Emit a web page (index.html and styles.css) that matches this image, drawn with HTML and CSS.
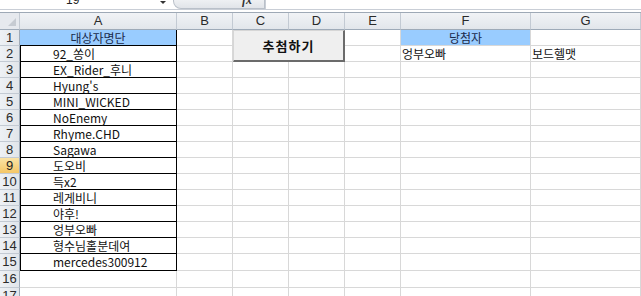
FILE: index.html
```html
<!DOCTYPE html>
<html lang="ko">
<head>
<meta charset="utf-8">
<link rel="stylesheet" href="styles.css">
</head>
<body>
<div class="fbar">
  <div class="namebox"><span class="nb-text">19</span><span class="caret"></span></div>
  <div class="fxpill"><span class="fx">fx</span></div>
  <div class="formula"></div>
</div>
<div class="gap"></div>
<div class="sheet">
  <div class="ch corner"><span class="tri"></span></div>
  <div class="ch">A</div><div class="ch">B</div><div class="ch">C</div><div class="ch">D</div><div class="ch">E</div><div class="ch">F</div><div class="ch">G</div>

  <div class="rh">1</div><div class="c a hl center title">대상자명단</div><div class="c"></div><div class="c"></div><div class="c"></div><div class="c"></div><div class="c hl center">당첨자</div><div class="c"></div>
  <div class="rh">2</div><div class="c a b">92_쏭이</div><div class="c"></div><div class="c"></div><div class="c"></div><div class="c"></div><div class="c t">엉부오빠</div><div class="c t">보드헬맷</div>
  <div class="rh">3</div><div class="c a b">EX_Rider_후니</div><div class="c"></div><div class="c"></div><div class="c"></div><div class="c"></div><div class="c"></div><div class="c"></div>
  <div class="rh">4</div><div class="c a b">Hyung's</div><div class="c"></div><div class="c"></div><div class="c"></div><div class="c"></div><div class="c"></div><div class="c"></div>
  <div class="rh">5</div><div class="c a b">MINI_WICKED</div><div class="c"></div><div class="c"></div><div class="c"></div><div class="c"></div><div class="c"></div><div class="c"></div>
  <div class="rh">6</div><div class="c a b">NoEnemy</div><div class="c"></div><div class="c"></div><div class="c"></div><div class="c"></div><div class="c"></div><div class="c"></div>
  <div class="rh">7</div><div class="c a b">Rhyme.CHD</div><div class="c"></div><div class="c"></div><div class="c"></div><div class="c"></div><div class="c"></div><div class="c"></div>
  <div class="rh">8</div><div class="c a b">Sagawa</div><div class="c"></div><div class="c"></div><div class="c"></div><div class="c"></div><div class="c"></div><div class="c"></div>
  <div class="rh sel">9</div><div class="c a b">도오비</div><div class="c"></div><div class="c"></div><div class="c"></div><div class="c"></div><div class="c"></div><div class="c"></div>
  <div class="rh">10</div><div class="c a b">득x2</div><div class="c"></div><div class="c"></div><div class="c"></div><div class="c"></div><div class="c"></div><div class="c"></div>
  <div class="rh">11</div><div class="c a b">레게비니</div><div class="c"></div><div class="c"></div><div class="c"></div><div class="c"></div><div class="c"></div><div class="c"></div>
  <div class="rh">12</div><div class="c a b">야후!</div><div class="c"></div><div class="c"></div><div class="c"></div><div class="c"></div><div class="c"></div><div class="c"></div>
  <div class="rh">13</div><div class="c a b">엉부오빠</div><div class="c"></div><div class="c"></div><div class="c"></div><div class="c"></div><div class="c"></div><div class="c"></div>
  <div class="rh">14</div><div class="c a b">형수님홀분데여</div><div class="c"></div><div class="c"></div><div class="c"></div><div class="c"></div><div class="c"></div><div class="c"></div>
  <div class="rh">15</div><div class="c a b">mercedes300912</div><div class="c"></div><div class="c"></div><div class="c"></div><div class="c"></div><div class="c"></div><div class="c"></div>
  <div class="rh">16</div><div class="c"></div><div class="c"></div><div class="c"></div><div class="c"></div><div class="c"></div><div class="c"></div><div class="c"></div>
  <div class="rh">17</div><div class="c"></div><div class="c"></div><div class="c"></div><div class="c"></div><div class="c"></div><div class="c"></div><div class="c"></div>

  <div class="btn">추첨하기</div>
</div>
</body>
</html>
```
FILE: styles.css
```css
html, body {
  margin: 0;
  padding: 0;
  background: #ffffff;
  overflow: hidden;
  width: 641px;
  height: 296px;
}
body {
  font-family: "Noto Sans CJK KR", "Noto Sans", sans-serif;
  color: #000;
}
.fbar {
  display: flex;
  height: 9px;
  border-bottom: 1px solid #c9ced6;
  overflow: hidden;
}
.namebox {
  width: 173px;
  display: flex;
  position: relative;
  background: #fff;
}
.nb-text {
  font-family: "Liberation Sans", sans-serif;
  font-size: 12px;
  line-height: 14px;
  margin-top: -7px;
  margin-left: 66px;
  color: #222;
}
.caret {
  margin-left: auto;
  margin-right: 7px;
  margin-top: 1px;
  width: 0;
  height: 0;
  border-left: 3px solid transparent;
  border-right: 3px solid transparent;
  border-top: 3px solid #333;
}
.fxpill {
  width: 92px;
  background: linear-gradient(#eef0f3, #e1e4e9);
  border: 1px solid #b9c0c9;
  border-top: none;
  border-radius: 0 0 0 8px;
  display: flex;
  justify-content: flex-end;
  box-sizing: border-box;
}
.fx {
  font-family: "Liberation Serif", serif;
  font-style: italic;
  font-weight: bold;
  font-size: 12px;
  line-height: 12px;
  margin-top: -6px;
  margin-right: 12px;
  color: #333;
}
.formula {
  flex: 1;
  border-left: 1px solid #c9ced6;
}
.gap {
  height: 2px;
  border-bottom: 1px solid #9ea9b6;
}
.sheet {
  position: relative;
  display: grid;
  grid-template-columns: 20px 157px 56px 56px 56px 56px 130px 1fr;
  grid-template-rows: 17px repeat(14, 16px) 17px 17px 16px;
  font-size: 12px;
}
.ch {
  background: linear-gradient(#f1f3f6, #e2e6eb);
  border-right: 1px solid #c3cad3;
  border-bottom: 1px solid #9eaab8;
  box-sizing: border-box;
  text-align: center;
  line-height: 16px;
  font-family: "Liberation Sans", sans-serif;
  font-size: 13px;
  color: #2a2a2a;
}
.corner {
  position: relative;
  background: #e6e9ee;
}
.tri {
  position: absolute;
  right: 3px;
  bottom: 3px;
  width: 0;
  height: 0;
  border-left: 8px solid transparent;
  border-bottom: 8px solid #c6cbd2;
}
.rh {
  background: linear-gradient(90deg, #eef1f5, #e1e5ea);
  border-right: 1px solid #9eaab8;
  border-bottom: 1px solid #c3cad3;
  box-sizing: border-box;
  text-align: center;
  line-height: 15px;
  font-family: "Liberation Sans", sans-serif;
  font-size: 13px;
  color: #2a2a2a;
}
.rh.sel {
  background: linear-gradient(#fae3a6, #f5c767);
  color: #222;
}
.c {
  border-right: 1px solid #d8d8d8;
  border-bottom: 1px solid #d8d8d8;
  box-sizing: border-box;
  line-height: 15px;
  white-space: nowrap;
  color: #111;
}
.a {
  padding-left: 33px;
}
.hl {
  background: #99ccff;
  color: #1a2a4a;
}
.center {
  text-align: center;
  padding-left: 0;
}
.title {
  border-bottom: 1px solid #000;
  border-right: 1px solid #000;
}
.b {
  border-right: 1px solid #000;
  border-bottom: 1px solid #000;
  box-shadow: inset 1px 0 0 #000;
}
.t {
  padding-left: 1px;
}
.btn {
  position: absolute;
  left: 233px;
  top: 17px;
  width: 112px;
  height: 32px;
  z-index: 2;
  background: #efefef;
  border-top: 1px solid #d6d6d6;
  border-left: 1px solid #d6d6d6;
  border-right: 2px solid #6b6b6b;
  border-bottom: 2px solid #6b6b6b;
  box-sizing: border-box;
  display: flex;
  align-items: center;
  justify-content: center;
  font-weight: bold;
  font-size: 13px;
  color: #111;
  letter-spacing: 1px;
}
```
